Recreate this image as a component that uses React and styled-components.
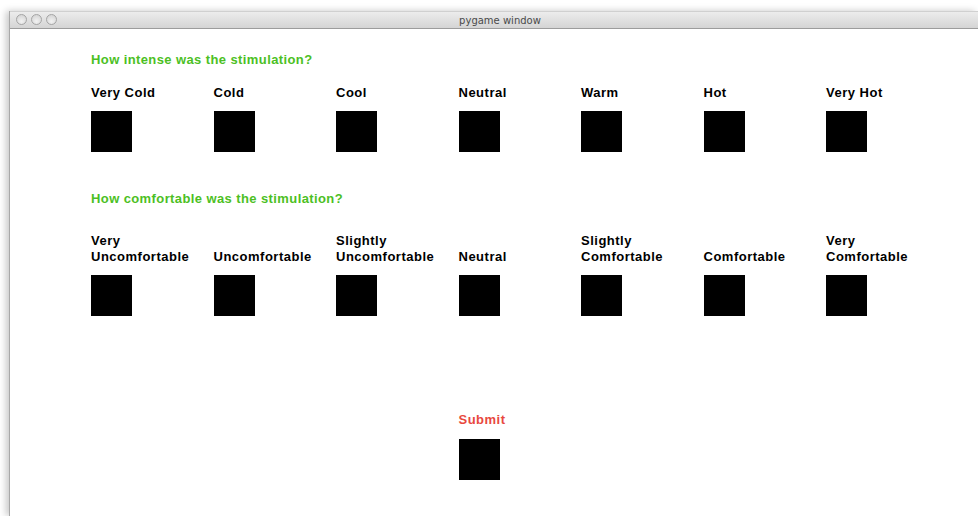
import React from 'react'
import styled, { createGlobalStyle } from 'styled-components'

const GlobalStyle = createGlobalStyle`
    html, body {
        margin: 0;
        padding: 0;
        background: #ffffff;
    }
    body {
        font-family: "Liberation Sans", Arial, sans-serif;
        overflow: hidden;
    }
`

const Desktop = styled.div`
    width: 978px;
    height: 516px;
    padding: 11px 0 0 9px;
    box-sizing: border-box;
    background: #ffffff;
    overflow: hidden;
`

const Window = styled.div`
    height: 100%;
    display: flex;
    flex-direction: column;
    border-left: 1px solid #a8a8a8;
    box-shadow: -3px 0 7px rgba(0, 0, 0, 0.22);
    background: #ffffff;
`

const TitleBar = styled.div`
    position: relative;
    height: 16px;
    display: flex;
    align-items: center;
    justify-content: center;
    padding-left: 12px;
    background: linear-gradient(#ececec, #d4d4d4);
    border-top: 1px solid #d0d0d0;
    border-bottom: 1px solid #9c9c9c;
    font-family: "DejaVu Sans", "Liberation Sans", sans-serif;
    font-size: 10px;
    color: #4a4a4a;
`

const Lights = styled.div`
    position: absolute;
    left: 6px;
    top: 2px;
    display: flex;
    gap: 4px;
`

const Light = styled.span`
    width: 11px;
    height: 11px;
    border-radius: 50%;
    box-sizing: border-box;
    border: 1px solid #a5a5a5;
    background: radial-gradient(circle at 50% 70%, #f2f2f2, #cfcfcf);
`

const Content = styled.div`
    flex: 1;
    padding: 23px 0 0 81px;
    display: flex;
    flex-direction: column;
`

const Question = styled.div`
    height: 16px;
    line-height: 16px;
    font-size: 13px;
    font-weight: bold;
    letter-spacing: 0.4px;
    color: #4cbf24;
    margin-top: ${p => p.$top || 0}px;
`

const Options = styled.div`
    display: grid;
    grid-template-columns: repeat(7, 122.5px);
    margin-top: ${p => p.$top}px;
`

const Option = styled.div`
    display: flex;
    flex-direction: column;
    justify-content: flex-end;
`

const Label = styled.div`
    height: ${p => p.$lines * 16}px;
    margin-bottom: -1px;
    display: flex;
    align-items: flex-end;
    line-height: 16px;
    font-size: 13px;
    font-weight: bold;
    letter-spacing: 0.5px;
    color: ${p => p.$color || '#000000'};
    white-space: pre-line;
`

const Box = styled.div`
    width: 41px;
    height: 41px;
    margin-top: ${p => p.$gap || 11}px;
    background: #000000;
`

const SubmitRow = styled.div`
    margin-top: 96px;
    padding-left: 367.5px;
`

const intensity = ['Very Cold', 'Cold', 'Cool', 'Neutral', 'Warm', 'Hot', 'Very Hot']
const comfort = [
    'Very\nUncomfortable',
    'Uncomfortable',
    'Slightly\nUncomfortable',
    'Neutral',
    'Slightly\nComfortable',
    'Comfortable',
    'Very\nComfortable',
]

const App = () => {
    return (
        <Desktop>
            <GlobalStyle />
            <Window>
                <TitleBar>
                    <Lights>
                        <Light />
                        <Light />
                        <Light />
                    </Lights>
                    pygame window
                </TitleBar>
                <Content>
                    <Question>How intense was the stimulation?</Question>
                    <Options $top={17}>
                        {intensity.map(t => (
                            <Option key={t}>
                                <Label $lines={1}>{t}</Label>
                                <Box />
                            </Option>
                        ))}
                    </Options>

                    <Question $top={39}>How comfortable was the stimulation?</Question>
                    <Options $top={26}>
                        {comfort.map(t => (
                            <Option key={t}>
                                <Label $lines={2}>{t}</Label>
                                <Box />
                            </Option>
                        ))}
                    </Options>

                    <SubmitRow>
                        <Label $lines={1} $color="#e8483e">Submit</Label>
                        <Box $gap={12} />
                    </SubmitRow>
                </Content>
            </Window>
        </Desktop>
    )
}

export default App
